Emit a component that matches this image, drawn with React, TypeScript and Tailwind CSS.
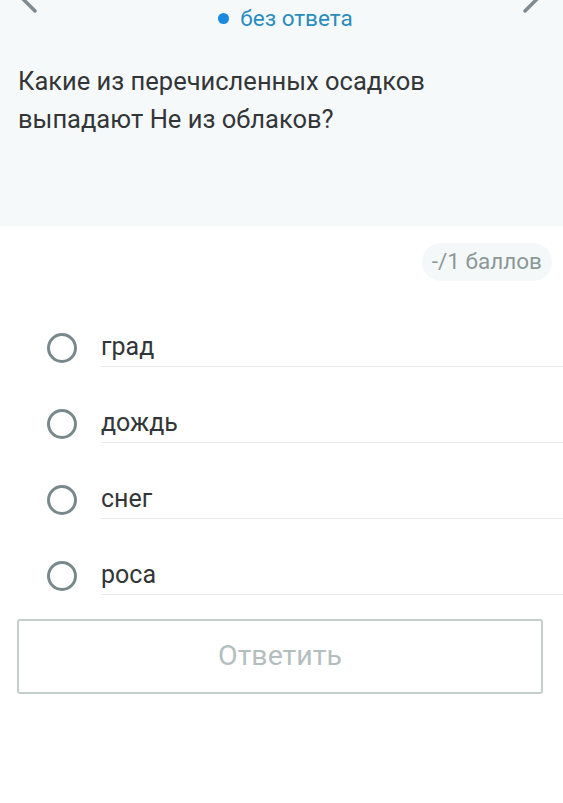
import React from "react";

const options = ["град", "дождь", "снег", "роса"];

export default function App() {
  return (
    <div className="relative w-[563px] min-h-[803px] overflow-hidden bg-white font-['Roboto',sans-serif]">
      {/* top: status + question */}
      <section className="relative h-[226px] bg-[#f6f9fa] px-[18px]">
        <svg className="absolute left-0 top-0" width="60" height="30" fill="none">
          <polyline points="38,-34 14,-10 35,11" stroke="#7f8b90" strokeWidth="3.5" strokeLinecap="round" strokeLinejoin="round" />
        </svg>
        <svg className="absolute right-0 top-0" width="60" height="30" fill="none">
          <polyline points="19,-34 43,-10 22,11" stroke="#7f8b90" strokeWidth="3.5" strokeLinecap="round" strokeLinejoin="round" />
        </svg>

        <div className="flex h-[36px] items-center justify-center gap-[11px] pl-[8px]">
          <span className="h-[11px] w-[11px] rounded-full bg-[#1a8ae0]" />
          <span className="text-[22.5px] leading-none text-[#2a8cbf]">без ответа</span>
        </div>

        <h1 className="mt-[26px] text-[25.5px] leading-[38px] text-[#333638]">
          Какие из перечисленных осадков
          <br />
          выпадают Не из облаков?
        </h1>
      </section>

      {/* score pill */}
      <div className="mt-[17px] flex justify-end pr-[11px]">
        <span className="flex h-[38px] items-center rounded-full bg-[#f5f8f8] px-[10px] text-[22.5px] text-[#8b9898]">
          -/1 баллов
        </span>
      </div>

      {/* answers */}
      <ul className="mt-[47px] flex flex-col gap-[37px]">
        {options.map((opt) => (
          <li key={opt} className="flex items-center pl-[47px]">
            <span className="h-[30px] w-[30px] shrink-0 rounded-full border-[3px] border-[#78898b]" />
            <span className="ml-[24px] flex h-[39px] flex-1 items-center border-b border-[#e7ebeb] text-[25px] text-[#333638]">
              {opt}
            </span>
          </li>
        ))}
      </ul>

      <div className="mt-[24px] pl-[17px] pr-[20px]">
        <button className="flex h-[75px] w-full items-center justify-center rounded-[3px] border-2 border-[#c6cdcd] bg-white text-[28.5px] text-[#b3bebe]">
          Ответить
        </button>
      </div>
    </div>
  );
}
